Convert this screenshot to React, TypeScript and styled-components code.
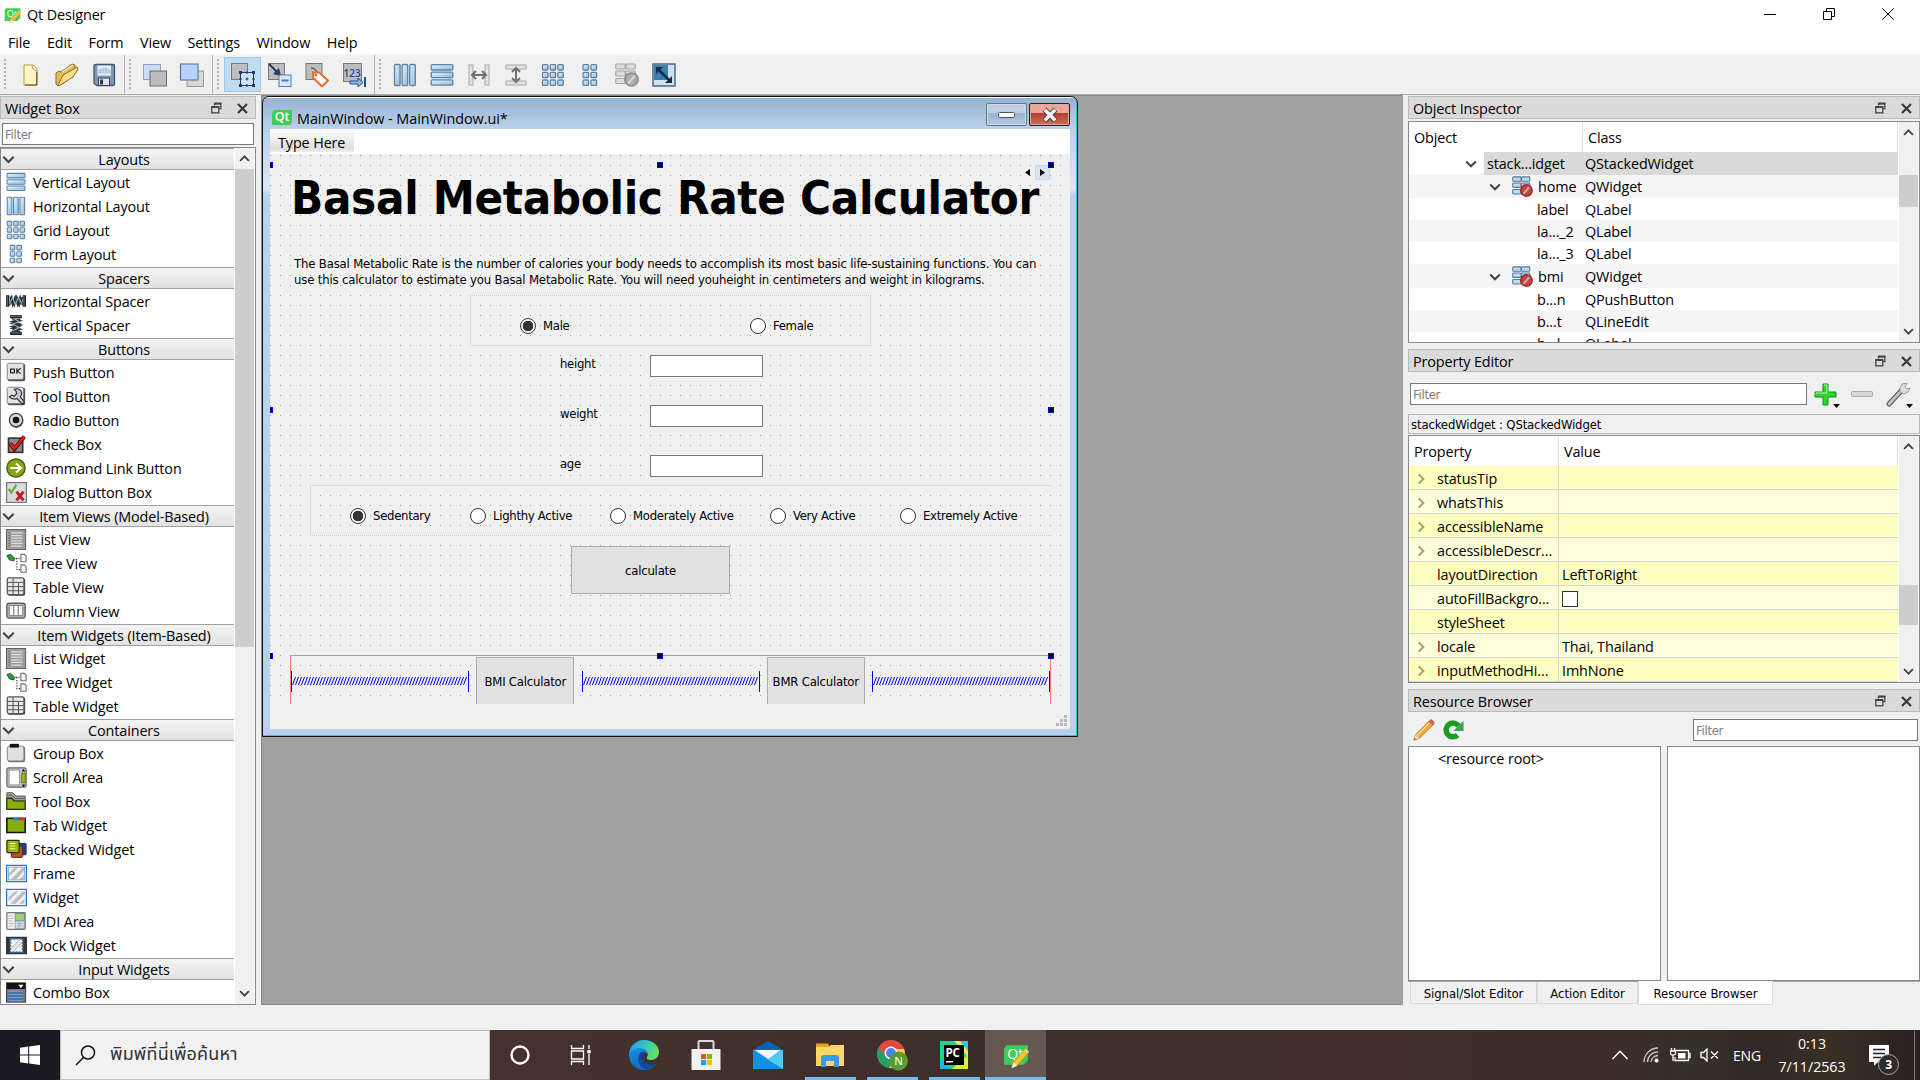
import React from "react";
import styled, { createGlobalStyle, css } from "styled-components";

const GlobalStyle = createGlobalStyle`
  * { box-sizing: border-box; }
  html, body { margin: 0; padding: 0; overflow: hidden; }
  svg { display: block; flex: none; }
`;

const uiFont = css`
  font-family: "Open Sans", "Noto Sans", sans-serif;
  font-size: 14.4px;
  letter-spacing: -0.12px;
`;
const smallFont = css`
  font-family: "DejaVu Sans Condensed", "DejaVu Sans", sans-serif;
  font-stretch: condensed;
  font-size: 13px;
  letter-spacing: -0.3px;
`;

/* ---------- shell ---------- */

const Screen = styled.div`
  width: 1920px;
  height: 1080px;
  display: flex;
  flex-direction: column;
  background: #f0f0f0;
  color: #000;
  white-space: nowrap;
  ${uiFont}
`;
const TitleBar = styled.header`
  height: 30px;
  background: #fff;
  display: flex;
  align-items: center;
  padding: 0 0 2px 4px;
  gap: 6px;
  flex: none;
`;
const WindowControls = styled.div`
  margin-left: auto;
  display: flex;
  gap: 47px;
  padding-right: 26px;
`;
const MenuBar = styled.nav`
  height: 24px;
  flex: none;
  background: #fff;
  display: flex;
  align-items: center;
  padding: 1px 0 0 8px;
  gap: 16.6px;
`;
const ToolBar = styled.div`
  height: 41px;
  flex: none;
  display: flex;
  border-top: 1px solid #f7f7f7;
  border-bottom: 1px solid #a8a8a8;
`;
const ToolGroup = styled.div<{ $w?: number }>`
  width: ${(p) => (p.$w ? `${p.$w}px` : "auto")};
  display: flex;
  align-items: center;
  border-right: ${(p) => (p.$w ? "1px solid #b4b4b4" : "0")};
`;
const Grip = styled.i`
  width: 2px;
  height: 31px;
  margin: 0 5px 0 4px;
  background: repeating-linear-gradient(#b2b2b2 0 2px, transparent 2px 4px);
`;
const ToolButton = styled.button<{ $on?: boolean }>`
  width: 37px;
  height: 35px;
  padding: 0;
  display: grid;
  place-items: center;
  background: ${(p) => (p.$on ? "#c0dcf3" : "transparent")};
  border: 1px solid ${(p) => (p.$on ? "#90c8f6" : "transparent")};
`;
const Workspace = styled.main`
  height: 935px;
  flex: none;
  display: flex;
  align-items: flex-start;
`;

/* ---------- docks ---------- */

const Dock = styled.section<{ $h?: number }>`
  display: flex;
  flex-direction: column;
  flex: none;
  height: ${(p) => (p.$h ? `${p.$h}px` : "auto")};
`;
const DockTitle = styled.header`
  height: 23px;
  flex: none;
  background: #dadada;
  border: 1px solid #b9b9b9;
  display: flex;
  align-items: center;
  padding: 1px 7px 0 4px;
`;
const DockButtons = styled.div`
  margin-left: auto;
  display: flex;
  gap: 15px;
  align-items: center;
`;
const FilterInput = styled.input`
  height: 22px;
  background: #fff;
  border: 1px solid #7a7a7a;
  padding: 0 2px;
  outline: 0;
  min-width: 0;
  ${smallFont}
  &::placeholder { color: #7c7c7c; opacity: 1; }
`;
const LeftColumn = styled.aside`
  width: 261px;
  flex: none;
  padding-top: 1px;
`;
const LeftDock = styled(Dock)`
  width: 256px;
  ${FilterInput} { margin: 4px 2px 2px 2px; }
`;
const ScrollFrame = styled.div`
  display: flex;
  flex: 1;
  min-height: 0;
  border: 1px solid #828790;
  background: #fff;
  overflow: hidden;
`;
const ScrollContent = styled.div`
  flex: 1;
  min-width: 0;
  padding-right: 1px;
  overflow: hidden;
`;
const ScrollTrack = styled.div`
  width: 20px;
  flex: none;
  background: #f0f0f0;
  border-right: 1px solid #fff;
  display: flex;
  flex-direction: column;
`;
const ScrollArrow = styled.div`
  height: 21px;
  flex: none;
  display: grid;
  place-items: center;
`;
const Thumb = styled.div<{ $before: number; $h: number }>`
  margin-top: ${(p) => p.$before}px;
  height: ${(p) => p.$h}px;
  background: #cdcdcd;
  margin-bottom: auto;
`;

const CategoryHeader = styled.div`
  height: 22px;
  display: flex;
  align-items: center;
  background: linear-gradient(#f4f4f4, #e2e2e2);
  border-top: 1px solid #a0a0a0;
  border-bottom: 1px solid #a0a0a0;
  padding-left: 1px;
  span { flex: 1; text-align: center; padding-right: 1px; }
`;
const CategoryItems = styled.div`
  padding-bottom: 1px;
`;
const WidgetRow = styled.div`
  height: 24px;
  display: flex;
  align-items: center;
  padding-left: 4px;
  gap: 6px;
`;
const IconSlot = styled.span`
  width: 22px;
  display: grid;
  place-items: center;
`;

/* ---------- MDI area ---------- */

const MdiArea = styled.div`
  width: 1142px;
  height: 910px;
  flex: none;
  background: #a0a0a0;
  border: 1px solid #8a8a92;
  border-right-color: #98989c;
`;
const SubWindow = styled.div`
  width: 816px;
  height: 641px;
  border: 1px solid #111;
  border-radius: 7px 7px 0 0;
  background: linear-gradient(#fff 0 1px, #99b4d1 1px, #b9d1ea 32px, #dce8f4 92px, #b9d1ea 98px);
  box-shadow: inset -1px -1px 0 #30c4dc;
  padding: 2px 7px 7px;
  display: flex;
  flex-direction: column;
`;
const SubTitle = styled.header`
  height: 30px;
  flex: none;
  display: flex;
  align-items: flex-start;
  padding: 4px 6px 0 8px;
  margin: 0 -6px;
  background: linear-gradient(#99b4d1, #b9d1ea);
`;
const SubCaption = styled.span`
  padding: 6px 0 0 5px;
  line-height: 19px;
  letter-spacing: -0.04px;
`;
const QtTag = styled.span`
  width: 20px;
  height: 15px;
  margin-top: 7px;
  background: #41cd52;
  border-radius: 4px 0 4px 0;
  color: #fff;
  font: 600 12.5px/14px "Open Sans", sans-serif;
  text-align: center;
`;
const SubButton = styled.button<{ $close?: boolean }>`
  width: 41px;
  height: 23px;
  margin-left: ${(p) => (p.$close ? "2px" : "auto")};
  padding: 0;
  display: grid;
  place-items: center;
  border-radius: 2px;
  border: 1px solid ${(p) => (p.$close ? "#501018" : "#66788e")};
  box-shadow: inset 0 0 0 1px ${(p) => (p.$close ? "#e0a89c" : "#cfdcea")};
  background: ${(p) =>
    p.$close
      ? "linear-gradient(#e8a89c 0 42%, #b8382a 42%, #d0705c)"
      : "linear-gradient(#bccfe3 0 42%, #98b2cf 42%, #b2c8df)"};
`;
const FormMenu = styled.div`
  height: 25px;
  flex: none;
  background: #fff;
`;
const TypeHere = styled.div`
  width: 84px;
  height: 23px;
  padding: 3px 0 0 8px;
  line-height: 21px;
  background: linear-gradient(#fff, #dedede 85%, #eee);
`;
const FormCanvas = styled.div`
  position: relative;
  height: 550px;
  flex: none;
  overflow: hidden;
  background: conic-gradient(from 270deg at 1px 1px, #9c9c9c 90deg, transparent 0) 0 1px / 10px 10px #f0f0f0;
  ${smallFont}
`;
const FormStatus = styled.div`
  height: 25px;
  flex: none;
  background: #f0f0f0;
  display: flex;
  justify-content: flex-end;
  align-items: flex-end;
  padding: 2px;
`;
const Heading = styled.h1`
  margin: 0;
  padding: 10px 0 0 21px;
  height: 102px;
  font: bold 47px/68px "DejaVu Sans Condensed", "DejaVu Sans", sans-serif;
  font-stretch: condensed;
  letter-spacing: -0.33px;
`;
const Intro = styled.p`
  margin: 0;
  padding-left: 24px;
  height: 39px;
  line-height: 16px;
  letter-spacing: -0.17px;
`;
const RadioGroup = styled.div<{ $left: number; $w: number; $openEnd?: boolean }>`
  margin-left: ${(p) => p.$left}px;
  width: ${(p) => p.$w}px;
  height: 51px;
  border: 1px dotted #c8c8c8;
  border-right-width: ${(p) => (p.$openEnd ? 0 : 1)}px;
  display: flex;
  align-items: center;
  padding-top: 10px;
`;
const RadioLead = styled.i<{ $w: number }>`
  width: ${(p) => p.$w}px;
  flex: none;
`;
const Radio = styled.label<{ $w: number }>`
  width: ${(p) => p.$w}px;
  flex: none;
  display: flex;
  align-items: center;
  gap: 7px;
`;
const RadioDot = styled.i<{ $on?: boolean }>`
  width: 16px;
  height: 16px;
  border-radius: 50%;
  border: 1px solid #333;
  background: ${(p) => (p.$on ? "radial-gradient(circle, #333 5px, #fff 5.6px)" : "#fff")};
`;
const Fields = styled.div`
  padding: 9px 0 8px 290px;
  display: grid;
  grid-template-columns: 90px 113px;
  grid-auto-rows: 22px;
  row-gap: 28px;
  span { line-height: 17px; }
`;
const FieldBox = styled.input`
  border: 1px solid #7a7a7a;
  background: #fff;
  padding: 0;
`;
const PushButton = styled.button<{ $w: number; $h: number }>`
  width: ${(p) => p.$w}px;
  height: ${(p) => p.$h}px;
  flex: none;
  padding: 0;
  background: #e1e1e1;
  border: 1px solid #adadad;
  color: #000;
  ${smallFont}
  letter-spacing: -0.22px;
`;
const ButtonLine = styled.div`
  padding: 10px 0 0 301px;
  height: 119px;
`;
const SpringRow = styled.div`
  margin-left: 20px;
  width: 761px;
  height: 58px;
  border: 1px solid #ef7d7d;
  padding-top: 1px;
  display: flex;
  align-items: flex-start;
  justify-content: space-between;
  svg { margin-top: 14px; }
`;
const Handle = styled.i<{ $x: number; $y: number }>`
  position: absolute;
  left: ${(p) => p.$x}px;
  top: ${(p) => p.$y}px;
  width: 6px;
  height: 6px;
  background: #000;
  border: 1px solid #0000f0;
`;
const PageSwitch = styled.div`
  position: absolute;
  left: 750px;
  top: 11px;
  display: flex;
`;
const PageButton = styled.i<{ $hot?: boolean }>`
  width: 15px;
  height: 15px;
  display: grid;
  place-items: center;
  background: ${(p) => (p.$hot ? "#d8e6f2" : "transparent")};
  border: 1px solid ${(p) => (p.$hot ? "#c0dcf3" : "transparent")};
`;

/* ---------- right column ---------- */

const RightColumn = styled.aside`
  flex: 1;
  padding: 1px 0 0 5px;
  display: flex;
  flex-direction: column;
`;
const Spacer = styled.div<{ $h: number }>`
  height: ${(p) => p.$h}px;
  flex: none;
`;
const HeaderRow = styled.div<{ $first: number }>`
  display: grid;
  grid-template-columns: ${(p) => p.$first}px 1fr;
  height: 30px;
  border-right: 1px solid #e0e0e0;
  span { padding-left: 5px; line-height: 31px; }
  span:first-child { border-right: 1px solid #e0e0e0; }
`;
const TreeRow = styled.div<{ $h: number; $bg: string; $indent: number }>`
  height: ${(p) => p.$h}px;
  display: grid;
  grid-template-columns: 176px 1fr;
  align-items: stretch;
  background: ${(p) => p.$bg};
  line-height: ${(p) => p.$h + 1}px;
  > div { display: flex; align-items: center; padding-left: ${(p) => p.$indent}px; overflow: hidden; }
`;
const NodeIcon = styled.span`
  padding: 0 5px 0 11px;
`;
const Selected = styled.span`
  flex: 1;
  background: #d9d9d9;
  padding-left: 3px;
  margin-left: 7px;
`;
const ClassCell = styled.span<{ $on?: boolean }>`
  background: ${(p) => (p.$on ? "#d9d9d9" : "transparent")};
`;
const PropertyRow = styled.div<{ $alt: boolean }>`
  height: 24px;
  display: grid;
  grid-template-columns: 150px 1fr;
  background: ${(p) => (p.$alt ? "#ffffdc" : "#ffffbf")};
  border-bottom: 1px solid #d4d4d0;
  line-height: 25px;
  > div { display: flex; align-items: center; }
  > div:first-child { border-right: 1px solid #d4d4d0; padding-left: 6px; }
  > div:last-child { padding-left: 3px; }
`;
const Expander = styled.i`
  width: 22px;
`;
const CheckSquare = styled.i`
  width: 16px;
  height: 16px;
  border: 1px solid #333;
  background: #fff;
`;
const PropertyTools = styled.div`
  display: flex;
  height: 42px;
  flex: none;
  padding: 11px 0 0 2px;
  ${FilterInput} { width: 397px; margin-right: 6px; }
`;
const ObjectPath = styled.div`
  height: 20px;
  flex: none;
  margin-bottom: 1px;
  border: 1px solid #b9b9b9;
  padding-left: 2px;
  line-height: 19px;
  ${smallFont}
  letter-spacing: -0.15px;
`;
const ResourceTools = styled.div`
  display: flex;
  height: 34px;
  flex: none;
  padding: 7px 2px 0 5px;
  gap: 7px;
  ${FilterInput} { width: 225px; margin-left: auto; }
`;
const Panes = styled.div`
  display: flex;
  gap: 6px;
  height: 235px;
  flex: none;
`;
const Pane = styled.div`
  flex: 1;
  background: #fff;
  border: 1px solid #828790;
  padding: 2px 0 0 29px;
`;
const Tabs = styled.div`
  display: flex;
  align-items: flex-start;
  padding-left: 2px;
  border-top: 1px solid #a8a8a8;
  ${smallFont}
  letter-spacing: -0.05px;
`;
const Tab = styled.div<{ $w: number; $on?: boolean }>`
  width: ${(p) => p.$w}px;
  height: ${(p) => (p.$on ? 24 : 22)}px;
  line-height: ${(p) => (p.$on ? 26 : 23)}px;
  margin-top: ${(p) => (p.$on ? "-1px" : "0")};
  text-align: center;
  background: ${(p) => (p.$on ? "#fff" : "#f0f0f0")};
  border: 1px solid #d9d9d9;
  border-top: 0;
`;

/* ---------- taskbar ---------- */

const StatusGap = styled.div`
  height: 0;
  flex: 1;
`;
const TaskBar = styled.footer`
  height: 50px;
  flex: none;
  display: flex;
  color: #fff;
  background: linear-gradient(90deg, #1d1b22 0, #1d1b22 60px, #46312f 490px, #3c2f29 1000px, #422f2a 1300px, #3f2d28 1580px, #353127 1700px, #2f2826 1760px, #393025 1830px, #292022 1920px);
`;
const Start = styled.div`
  width: 60px;
  display: grid;
  place-items: center;
`;
const Search = styled.div`
  width: 430px;
  background: #f2f2f2;
  border: 1px solid #bcbcbc;
  display: flex;
  align-items: center;
  padding-left: 14px;
  gap: 14px;
  color: #333;
  font: 18px/24px "Noto Sans Thai", "Noto Sans", "Loma", sans-serif;
  letter-spacing: 0.15px;
`;
const TaskItem = styled.div<{ $w: number; $on?: boolean; $open?: boolean }>`
  width: ${(p) => p.$w}px;
  display: grid;
  place-items: center;
  background: ${(p) => (p.$on ? "#655852" : "transparent")};
  box-shadow: ${(p) => (p.$on ? "inset 0 -3px 0 #76b9ed" : "none")};
  background-image: ${(p) => (p.$open ? "linear-gradient(#76b9ed, #76b9ed)" : "none")};
  background-size: 51px 3px;
  background-position: center bottom;
  background-repeat: no-repeat;
`;
const Tray = styled.div`
  margin-left: auto;
  display: flex;
  align-items: center;
`;
const TrayGap = styled.i<{ $w: number }>`
  width: ${(p) => p.$w}px;
`;
const Lang = styled.span`
  width: 56px;
  text-align: center;
  font-size: 14px;
`;
const Clock = styled.div`
  width: 74px;
  text-align: center;
  font-size: 14.2px;
  line-height: 23px;
  padding-top: 0;
  letter-spacing: 0;
`;
const Notice = styled.div`
  position: relative;
  margin-left: 17px;
  width: 49px;
  height: 50px;
  border-right: 1px solid #7d7673;
  padding: 15px 0 0 3px;
`;
const Badge = styled.span`
  position: absolute;
  left: 12px;
  top: 24px;
  width: 21px;
  height: 21px;
  border: 1px solid #aaa;
  border-radius: 50%;
  background: #2f2b2b;
  font: bold 12px/19px "Open Sans", sans-serif;
  text-align: center;
`;

/* ---------- icons ---------- */

type Cell = [number, number, number, number];
const Cells = ({ cells, size = 24 }: { cells: Cell[]; size?: number }) => (
  <svg width={size} height={size} viewBox="0 0 24 24">
    <defs>
      <linearGradient id="cellFill" x1="0" y1="0" x2="1" y2="1">
        <stop offset="0" stopColor="#e2f4ff" />
        <stop offset="1" stopColor="#86bfe6" />
      </linearGradient>
    </defs>
    {cells.map(([x, y, w, h], i) => (
      <rect key={i} x={x} y={y} width={w} height={h} rx="1" fill="url(#cellFill)" stroke="#64809c" strokeWidth="1.3" />
    ))}
  </svg>
);
const range = (n: number) => Array.from({ length: n }, (_, i) => i);
const columns: Cell[] = range(3).map((i) => [1.5 + i * 7.6, 1.5, 5.6, 21]);
const rowsCells: Cell[] = range(3).map((i) => [1.2, 1.6 + i * 7.6, 21.6, 5.4]);
const gridCells: Cell[] = range(9).map((i) => [1.5 + (i % 3) * 7.7, 1.6 + Math.floor(i / 3) * 7.7, 5.4, 5.4]);
const formCells: Cell[] = range(6).map((i) => [5 + (i % 2) * 8, 1.6 + Math.floor(i / 2) * 7.7, 5.6, 5.4]);

const Svg = ({ s = 24, children }: { s?: number; children: React.ReactNode }) => (
  <svg width={s} height={s} viewBox="0 0 24 24" fill="none">{children}</svg>
);
const GraySquare = ({ x = 1, y = 1, s = 16 }) => (
  <rect x={x} y={y} width={s} height={s} fill="#bdbdbd" stroke="#777" />
);

const NewIcon = () => (
  <Svg><path d="M6 2h8q5 1 5 7v13H6z" fill="#fff6c4" stroke="#b59a3c" /><path d="M14 2q0 5 5 6" fill="#fff" stroke="#b59a3c" /><path d="M18.800 9v13H7" stroke="#4d4630" /></Svg>
);
const OpenIcon = () => (
  <Svg><path d="M1 21V10l3-2 2 1 11-8 3 1v5L9 20l-6 3z" fill="#e3bf5a" stroke="#8c6a1c" /><path d="M3 22l5-10L22 4l1 2-5 8-14 9z" fill="#f7dc8a" stroke="#8c6a1c" /><path d="M7 9L18 2" stroke="#fff" /></Svg>
);
const SaveIcon = () => (
  <Svg><path d="M4 1.500h17q1.500 0 1.500 1.500v18q0 1.500-1.500 1.500H5l-3-2V3q0-1.500 2-1.500z" fill="#7d97b8" stroke="#41566f" strokeWidth="1.300" /><rect x="5.500" y="2.500" width="13.500" height="10" fill="#e9f0f7" /><path d="M5.500 7q8-5 13.500 0v3.500H5.500z" fill="#b4cde8" /><rect x="6.500" y="15" width="11" height="7.500" fill="#e4e4e4" stroke="#3b4250" /><rect x="8" y="16.500" width="3" height="5" fill="#2b3c58" /></Svg>
);
const LowerIcon = () => (
  <Svg><rect x="0.500" y="1.500" width="17" height="15" fill="#cbdcf6" stroke="#8ba3cc" /><rect x="7" y="8" width="16.500" height="15" fill="#bcbcbc" stroke="#6b6b6b" /></Svg>
);
const RaiseIcon = () => (
  <Svg><rect x="7" y="8" width="16.500" height="15.500" fill="#d7d7d7" stroke="#9a9a9a" /><rect x="0.500" y="1" width="17.500" height="16" fill="#b8d2fa" stroke="#4d6a9c" /></Svg>
);
const EditWidgetsIcon = () => (
  <Svg><GraySquare x={0.5} y={0.5} s={16} /><rect x="9.500" y="9.500" width="13" height="13" fill="#cfe2f8" stroke="#1f3d66" />{[9.5, 22.5].map((x) => [9.5, 22.5].map((y) => <rect key={`${x}${y}`} x={x - 1.5} y={y - 1.5} width="3" height="3" fill="#1f3d66" />))}<path d="M16 14.500v3M14.500 16h3" stroke="#1f3d66" /><path d="M16 8v3M16 21v3M8 16h3M21 16h3" stroke="#1f3d66" strokeDasharray="1 1" /></Svg>
);
const SignalsIcon = () => (
  <Svg><GraySquare x={0.5} y={0.5} s={16} /><path d="M1 1l9 9" stroke="#1e3f63" strokeWidth="2" /><path d="M13 13L11 5 5 11z" fill="#1e3f63" /><rect x="11" y="12" width="12" height="11.500" fill="#d9e8fb" stroke="#5277b0" /><path d="M13.500 17.500h7" stroke="#5277b0" strokeWidth="2" /></Svg>
);
const BuddyIcon = () => (
  <Svg><GraySquare x={1} y={0.5} s={16} /><path d="M6 5q5 0 6 5" stroke="#333" /><path d="M8 9.500h6l9 8-6 6-9-9z" fill="#fff" stroke="#e0702c" strokeWidth="2" /><circle cx="10.800" cy="12" r="1.200" fill="#c4541c" /></Svg>
);
const TabOrderIcon = () => (
  <Svg><GraySquare x={1.500} y={0.5} s={18} /><text x="1.500" y="14" fontSize="10" fontFamily="Open Sans" fontWeight="600" letterSpacing="0" fill="#1f4f8f">123</text><path d="M8 18h8v-3l5 4.500-5 4.500v-3H8z" fill="#8fbbe8" stroke="#1f4f8f" /><path d="M23 14v10" stroke="#1f4f8f" strokeWidth="2" /></Svg>
);
const SplitHIcon = () => (
  <Svg><rect x="2" y="2" width="4" height="20" fill="#e4e4e4" stroke="#a8a8a8" /><rect x="18" y="2" width="4" height="20" fill="#e4e4e4" stroke="#a8a8a8" /><path d="M5 12h14M9 8l-4 4 4 4M15 8l4 4-4 4" stroke="#707070" strokeWidth="2" /></Svg>
);
const SplitVIcon = () => (
  <Svg><rect x="2" y="2" width="20" height="4" fill="#e4e4e4" stroke="#a8a8a8" /><rect x="2" y="18" width="20" height="4" fill="#e4e4e4" stroke="#a8a8a8" /><path d="M12 5v14M8 9l4-4 4 4M8 15l4 4 4-4" stroke="#707070" strokeWidth="2" /></Svg>
);
const BreakIcon = ({ gray, s = 24 }: { gray?: boolean; s?: number }) => {
  const c = gray ? ["#dedede", "#a4a4a4", "#aaaaaa", "#8b8b8b"] : ["#b5dcf5", "#5c7790", "#cf3f3a", "#8f2a28"];
  return (
    <Svg s={s}>
      {[1, 8, 15.5].map((y) => (
        <g key={y} fill={c[0]} stroke={c[1]} strokeWidth="1.2"><rect x="0.8" y={y} width="9.5" height="5" rx="1" /><rect x="10.8" y={y} width="9.5" height="5" rx="1" /></g>
      ))}
      <circle cx="16.500" cy="16.500" r="6.600" fill={c[2]} stroke={c[3]} strokeWidth="1.500" />
      <path d="M14 19.500l5-6" stroke={gray ? "#d5d5d5" : "#a7b3c4"} strokeWidth="2.500" strokeLinecap="round" />
    </Svg>
  );
};
const AdjustIcon = () => (
  <Svg><rect x="1" y="1" width="22" height="22" fill="#cfe0ee" stroke="#4b6a86" strokeWidth="1.500" /><path d="M2 2h14v15H2z" fill="#3f7fae" /><path d="M6 6l12 12" stroke="#0e2e49" strokeWidth="2.500" /><path d="M4 4h7l-7 7zM20 20h-7l7-7z" fill="#0e2e49" /></Svg>
);
const SpacerIcon = ({ v }: { v?: boolean }) => (
  <Svg s={20}><g transform={v ? "rotate(90 12 12)" : ""}><path d="M2 5v14M22 5v14" stroke="#222" strokeWidth="4" /><path d="M1.500 6v12M21.500 6v12" stroke="#8d8d8d" /><path d="M4 17L7 7l3 10 3-10 3 10 4-10M5 7l3 10 3-10 3 10 3-10 3 10" stroke="#2c3538" strokeWidth="2" /><path d="M4 15l4-7 3 8 4-8 4 7" stroke="#8fb4c4" strokeWidth="1.300" /></g></Svg>
);
const Raised = ({ children }: { children?: React.ReactNode }) => (
  <Svg s={20}><rect x="2" y="2" width="21" height="21" rx="2" fill="#555" /><rect x="1.500" y="1.500" width="19.500" height="19.500" rx="2" fill="#e2e2e2" stroke="#777" />{children}</Svg>
);
const PushIcon = () => <Raised><rect x="5.500" y="8.500" width="4.500" height="4.500" stroke="#111" strokeWidth="1.300" /><path d="M13 7.500v6.500M17.500 7.500L13.500 11l4 3" stroke="#111" strokeWidth="1.300" /></Raised>;
const ToolIcon = () => <Raised><path d="M10 4q5-2 8 2 2 4-1 7l5 6-2 3-7-7q-5 2-9-2l3-2 3 1 3-3-1-3z" fill="#c3ccd6" stroke="#333" strokeWidth="1.400" /></Raised>;
const RadioIcon = () => <Svg s={20}><circle cx="12.500" cy="13" r="8.500" fill="#555" /><circle cx="12" cy="12" r="8" fill="#d8d8d8" stroke="#444" strokeWidth="1.500" /><circle cx="12" cy="12" r="4" fill="#111" /></Svg>;
const CheckIcon = () => <Svg s={20}><rect x="3" y="5" width="17" height="17" fill="#8d8d8d" stroke="#333" strokeWidth="2" /><path d="M5 11l5 7L22 3" stroke="#5c0000" strokeWidth="5" /><path d="M5 11l5 6.500L22 3" stroke="#dd2222" strokeWidth="3" /></Svg>;
const CommandIcon = () => <Svg s={20}><circle cx="12" cy="12" r="11" fill="#86a514" stroke="#44560a" strokeWidth="1.500" /><path d="M5 12h12M12 6.500l6 5.500-6 5.500" stroke="#fff" strokeWidth="2.500" /></Svg>;
const DialogIcon = () => <Svg s={21}><rect x="0.700" y="0.700" width="22.600" height="22.600" fill="#dcdcdc" stroke="#777" strokeWidth="1.400" /><path d="M3 8l3 4 6-9" stroke="#5cb531" strokeWidth="2.500" /><path d="M12 11l8 10M20 11l-8 10" stroke="#c01e24" strokeWidth="3.500" /></Svg>;
const ListIcon = () => <Svg s={21}><rect x="0.500" y="0.500" width="22" height="23" fill="#9c9c9c" stroke="#555" /><path d="M6 4.500h13M6 7.500h12M6 10.500h13M6 13.500h12M6 16.500h13M6 19.500h12" stroke="#dedede" strokeWidth="1.400" /><path d="M3 4.500h1.500M3 7.500h1.500M3 10.500h1.500M3 13.500h1.500M3 16.500h1.500M3 19.500h1.500" stroke="#555" /></Svg>;
const TreeIcon = () => <Svg s={21}><path d="M1 3l4-1.500 5 4.500-1 3-5-1z" fill="#2f9a3c" stroke="#12511c" /><path d="M11 6h5M12.500 6v13h4" stroke="#333" strokeWidth="1.300" strokeDasharray="1.500 1.500" /><path d="M17 1.500h4l2 2v6.500h-6zM17 13.500h4l2 2v6.500h-6z" fill="#f2f2f2" stroke="#777" strokeWidth="1.300" /></Svg>;
const TableIcon = () => <Svg s={20}><rect x="2" y="1.500" width="21" height="21" rx="2" fill="#444" /><rect x="1.500" y="1" width="20" height="20" rx="2" fill="#e8e8e8" stroke="#555" strokeWidth="1.500" /><path d="M2 6.500h19M2 11.500h19M2 16.500h19M8.500 1.500v19M15 6.500v14" stroke="#555" strokeWidth="1.200" /></Svg>;
const ColumnIcon = () => <Svg s={20}><rect x="1" y="2.500" width="22" height="18" rx="3" fill="#b5b5b5" stroke="#555" strokeWidth="1.500" /><path d="M4 5.500h16v12H4z" fill="#fff" stroke="#777" /><path d="M9.300 5.500v12M14.700 5.500v12" stroke="#777" strokeWidth="1.300" /></Svg>;
const GroupIcon = () => <Svg s={20}><rect x="2" y="4" width="21" height="19" rx="3" fill="#777" /><rect x="1.500" y="3.500" width="20" height="18" rx="3" fill="#e0e0e0" stroke="#777" /><rect x="4.500" y="1" width="11" height="4.500" fill="#111" /></Svg>;
const ScrollIcon = () => <Svg s={21}><rect x="1" y="1" width="22" height="22" rx="2" fill="#c9c9c9" stroke="#666" strokeWidth="1.400" /><rect x="3.500" y="3.500" width="12" height="17" fill="#fff" stroke="#888" /><rect x="18" y="7" width="4" height="11" fill="#9ac21c" stroke="#536d05" /><path d="M18 5l2-3 2 3zM18 20l2 3 2-3z" fill="#111" /></Svg>;
const ToolBoxIcon = () => <Svg s={20}><path d="M1 2h7l4 4h11v16H1z" fill="#a0a0a0" stroke="#444" /><path d="M1 5h6l4 4h12M1 8h6l4 4h12" stroke="#555" /><path d="M1 9h6l3 3h13v10H1z" fill="#86ac10" stroke="#26330a" strokeWidth="1.400" /></Svg>;
const TabIcon = () => <Svg s={20}><path d="M1 4h22v17H1z" fill="#86ac10" stroke="#111" strokeWidth="1.800" /><path d="M8.500 3.500h7v3h-7z" fill="#2383e6" /><path d="M16 3.500h7v3h-7z" fill="#e03434" /></Svg>;
const StackIcon = () => <Svg s={21}><rect x="10" y="5" width="13" height="13" rx="1" fill="#12479c" stroke="#0a2148" /><rect x="6" y="8" width="13" height="13" rx="1" fill="#cc4a14" stroke="#43200c" /><rect x="1" y="1.500" width="14" height="14" rx="1" fill="#94b913" stroke="#26330a" strokeWidth="1.400" /><path d="M4.500 5h6M4.500 8h6M4.500 11h6" stroke="#f3f878" strokeWidth="1.400" /></Svg>;
const FrameIcon = ({ inner }: { inner?: boolean }) => <Svg s={21}><rect x="0.700" y="2.700" width="22.600" height="18.600" fill="#f1f1f1" stroke="#2b73c4" strokeWidth="1.400" /><path d="M3 12l7-7h4L3 16zM5 19L19 5h2.500v3L11 19zM15 19l6-6v5l-1 1z" fill="#bdbdbd" />{inner && <rect x="2.800" y="4.800" width="18.400" height="14.400" stroke="#85b0de" />}</Svg>;
const MdiIcon = () => <Svg s={20}><rect x="1" y="2" width="22" height="20" rx="1" fill="#f3f3f3" stroke="#777" strokeWidth="1.500" /><rect x="11" y="3" width="11" height="9" fill="#9fcf7d" stroke="#6b8f55" /><rect x="11" y="12" width="11" height="9" fill="#cfdcf0" stroke="#8599b8" /><path d="M3 6h5M3 9h6M3 12h5M3 15h6M3 18h5M13 15h7M13 18h7M16 13v8" stroke="#aaa" /></Svg>;
const DockIcon = () => <Svg s={21}><rect x="0" y="2" width="24" height="20" fill="#33353a" /><rect x="5" y="4.500" width="14" height="15" fill="#f1f1f1" stroke="#2b73c4" strokeWidth="2" strokeDasharray="2 1.500" /><path d="M7 15l8-9M9 18l8-9" stroke="#ccc" strokeWidth="2" /></Svg>;
const ComboIcon = () => <Svg s={21}><rect x="0.500" y="1" width="22" height="22" fill="#777" stroke="#333" /><rect x="1" y="1" width="21" height="7" fill="#111" /><path d="M14 3h6l-3 4z" fill="#fff" /><rect x="3" y="9.500" width="16" height="12.500" fill="#6c99d8" /><path d="M3 12.500h16M3 16h16M3 19.500h16" stroke="#24466f" /></Svg>;

const Chevron = ({ dir = "down", color = "#444", w = 12 }: { dir?: "down" | "up" | "right"; color?: string; w?: number }) => (
  <svg width={w} height={w} viewBox="0 0 12 12" fill="none" stroke={color} strokeWidth="2">
    <path d={dir === "down" ? "M1.200 3.500L6 8.300 10.800 3.500" : dir === "up" ? "M1.200 8.500L6 3.700l4.800 4.800" : "M3.500 1.200L8.300 6 3.500 10.800"} />
  </svg>
);
const FloatIcon = () => (
  <svg width="11" height="12" viewBox="0 0 11 12" fill="none" stroke="#444" strokeWidth="1.300"><path d="M3.500 3.500V1.700h6.300v5H8" /><path d="M3 1.500h7.400" strokeWidth="2" /><rect x="0.800" y="5" width="7" height="5.800" /><path d="M0.500 5h7.600" strokeWidth="2" /></svg>
);
const CloseIcon = () => (
  <svg width="11" height="11" viewBox="0 0 11 11" stroke="#3a3a3a" strokeWidth="2.200"><path d="M1 1l9 9M10 1l-9 9" /></svg>
);
const QtIcon = ({ s }: { s: number }) => (
  <Svg s={s}>
    <path d="M3 3h20v14l-4 4H1V6z" fill="#41cd52" />
    <text x="4" y="16" fontSize="13" fontFamily="Open Sans" fill="#fff">Qt</text>
    <path d="M21 6l3 3-11 13-5 2 1.500-5z" fill="#fbc531" stroke="#c78f1c" strokeWidth="0.600" />
    <path d="M19.500 7.700L21 6l3 3-1.500 1.700z" fill="#f3c1b0" />
    <path d="M8 24l1.500-5 3.500 3z" fill="#eee" />
  </Svg>
);
const Spring = () => (
  <svg width="178" height="21" viewBox="0 0 178 21" stroke="#0000e0" fill="none">
    <path d="M0.500 0v21M177.500 0v21" />
    <path d={range(58).map((i) => `M${1.500 + i * 3} 14l3-8`).join("")} strokeWidth="1" />
  </svg>
);

/* ---------- data ---------- */

const palette: { title: string; items: [string, React.ReactNode][] }[] = [
  { title: "Layouts", items: [
    ["Vertical Layout", <Cells size={20} cells={rowsCells} />],
    ["Horizontal Layout", <Cells size={20} cells={columns} />],
    ["Grid Layout", <Cells size={20} cells={gridCells} />],
    ["Form Layout", <Cells size={20} cells={formCells} />],
  ] },
  { title: "Spacers", items: [["Horizontal Spacer", <SpacerIcon />], ["Vertical Spacer", <SpacerIcon v />]] },
  { title: "Buttons", items: [
    ["Push Button", <PushIcon />], ["Tool Button", <ToolIcon />], ["Radio Button", <RadioIcon />],
    ["Check Box", <CheckIcon />], ["Command Link Button", <CommandIcon />], ["Dialog Button Box", <DialogIcon />],
  ] },
  { title: "Item Views (Model-Based)", items: [
    ["List View", <ListIcon />], ["Tree View", <TreeIcon />], ["Table View", <TableIcon />], ["Column View", <ColumnIcon />],
  ] },
  { title: "Item Widgets (Item-Based)", items: [["List Widget", <ListIcon />], ["Tree Widget", <TreeIcon />], ["Table Widget", <TableIcon />]] },
  { title: "Containers", items: [
    ["Group Box", <GroupIcon />], ["Scroll Area", <ScrollIcon />], ["Tool Box", <ToolBoxIcon />], ["Tab Widget", <TabIcon />],
    ["Stacked Widget", <StackIcon />], ["Frame", <FrameIcon inner />], ["Widget", <FrameIcon />], ["MDI Area", <MdiIcon />], ["Dock Widget", <DockIcon />],
  ] },
  { title: "Input Widgets", items: [["Combo Box", <ComboIcon />]] },
];

type Node = { name: string; cls: string; kind: "sel" | "page" | "leaf" };
const objects: Node[] = [
  { name: "stack...idget", cls: "QStackedWidget", kind: "sel" },
  { name: "home", cls: "QWidget", kind: "page" },
  { name: "label", cls: "QLabel", kind: "leaf" },
  { name: "la..._2", cls: "QLabel", kind: "leaf" },
  { name: "la..._3", cls: "QLabel", kind: "leaf" },
  { name: "bmi", cls: "QWidget", kind: "page" },
  { name: "b...n", cls: "QPushButton", kind: "leaf" },
  { name: "b...t", cls: "QLineEdit", kind: "leaf" },
  { name: "b...l", cls: "QLabel", kind: "leaf" },
];
const indents = { sel: 56, page: 80, leaf: 128 };

const properties: { name: string; value?: string; open?: boolean; check?: boolean }[] = [
  { name: "statusTip", open: true },
  { name: "whatsThis", open: true },
  { name: "accessibleName", open: true },
  { name: "accessibleDescr...", open: true },
  { name: "layoutDirection", value: "LeftToRight" },
  { name: "autoFillBackgro...", check: true },
  { name: "styleSheet" },
  { name: "locale", value: "Thai, Thailand", open: true },
  { name: "inputMethodHi...", value: "ImhNone", open: true },
];

const toolGroups: { w?: number; items: [React.ReactNode, boolean?][] }[] = [
  { w: 125, items: [[<NewIcon />], [<OpenIcon />], [<SaveIcon />]] },
  { w: 88, items: [[<LowerIcon />], [<RaiseIcon />]] },
  { w: 162, items: [[<EditWidgetsIcon />, true], [<SignalsIcon />], [<BuddyIcon />], [<TabOrderIcon />]] },
  { items: [
    [<Cells cells={columns} />], [<Cells cells={rowsCells} />], [<SplitHIcon />], [<SplitVIcon />],
    [<Cells cells={gridCells} />], [<Cells cells={formCells} />], [<BreakIcon gray />], [<AdjustIcon />],
  ] },
];

/* ---------- parts ---------- */

const DockHeader = ({ title }: { title: string }) => (
  <DockTitle>
    {title}
    <DockButtons><FloatIcon /><CloseIcon /></DockButtons>
  </DockTitle>
);
const Scroller = ({ before, h }: { before: number; h: number }) => (
  <ScrollTrack>
    <ScrollArrow><Chevron dir="up" w={11} /></ScrollArrow>
    <Thumb $before={before} $h={h} />
    <ScrollArrow><Chevron w={11} /></ScrollArrow>
  </ScrollTrack>
);

const WidgetBox = () => (
  <LeftColumn>
    <LeftDock $h={909}>
      <DockHeader title="Widget Box" />
      <FilterInput placeholder="Filter" />
      <ScrollFrame>
        <ScrollContent>
          {palette.map((group) => (
            <React.Fragment key={group.title}>
              <CategoryHeader><Chevron w={13} /><span>{group.title}</span></CategoryHeader>
              <CategoryItems>
                {group.items.map(([name, icon]) => (
                  <WidgetRow key={name}><IconSlot>{icon}</IconSlot>{name}</WidgetRow>
                ))}
              </CategoryItems>
            </React.Fragment>
          ))}
        </ScrollContent>
        <Scroller before={0} h={478} />
      </ScrollFrame>
    </LeftDock>
  </LeftColumn>
);

const FormWindow = () => (
  <SubWindow>
    <SubTitle>
      <QtTag>Qt</QtTag>
      <SubCaption>MainWindow - MainWindow.ui*</SubCaption>
      <SubButton><svg width="17" height="6"><rect x="0.500" y="0.500" width="16" height="5" rx="1" fill="#fff" stroke="#4b5563" /></svg></SubButton>
      <SubButton $close>
        <svg width="18" height="16" viewBox="0 0 18 16"><path d="M3.500 2.500l11 11M14.500 2.500l-11 11" stroke="#5b3a44" strokeWidth="5.500" /><path d="M3.800 2.800l10.400 10.400M14.200 2.800L3.800 13.200" stroke="#f4f4f4" strokeWidth="3.500" /></svg>
      </SubButton>
    </SubTitle>
    <FormMenu><TypeHere>Type Here</TypeHere></FormMenu>
    <FormCanvas>
      <Heading>Basal Metabolic Rate Calculator</Heading>
      <Intro>
        The Basal Metabolic Rate is the number of calories your body needs to accomplish its most basic life-sustaining functions. You can<br />
        use this calculator to estimate you Basal Metabolic Rate. You will need youheight in centimeters and weight in kilograms.
      </Intro>
      <RadioGroup $left={200} $w={401}>
        <RadioLead $w={49} />
        <Radio $w={230}><RadioDot $on />Male</Radio>
        <Radio $w={100}><RadioDot />Female</Radio>
      </RadioGroup>
      <Fields>
        <span>height</span><FieldBox />
        <span>weight</span><FieldBox />
        <span>age</span><FieldBox />
      </Fields>
      <RadioGroup $left={40} $w={741} $openEnd>
        <RadioLead $w={39} />
        <Radio $w={120}><RadioDot $on />Sedentary</Radio>
        <Radio $w={140}><RadioDot />Lighthy Active</Radio>
        <Radio $w={160}><RadioDot />Moderately Active</Radio>
        <Radio $w={130}><RadioDot />Very Active</Radio>
        <Radio $w={130}><RadioDot />Extremely Active</Radio>
      </RadioGroup>
      <ButtonLine><PushButton $w={159} $h={48}>calculate</PushButton></ButtonLine>
      <SpringRow>
        <Spring />
        <PushButton $w={98} $h={49}>BMI Calculator</PushButton>
        <Spring />
        <PushButton $w={98} $h={49}>BMR Calculator</PushButton>
        <Spring />
      </SpringRow>
      <PageSwitch>
        <PageButton><svg width="5" height="7"><path d="M5 0v7L0 3.500z" /></svg></PageButton>
        <PageButton $hot><svg width="5" height="7"><path d="M0 0v7l5-3.500z" /></svg></PageButton>
      </PageSwitch>
      {[8, 253, 499].map((y) => [-3, 387, 778].map((x) => (x === 387 && y === 253 ? null : <Handle key={`${x}-${y}`} $x={x} $y={y} />)))}
    </FormCanvas>
    <FormStatus>
      <svg width="12" height="12" fill="#b8b8b8"><path d="M8 0h3v3H8zM4 4h3v3H4zM8 4h3v3H8zM0 8h3v3H0zM4 8h3v3H4zM8 8h3v3H8z" /></svg>
    </FormStatus>
  </SubWindow>
);

const ObjectInspector = () => (
  <Dock $h={247}>
    <DockHeader title="Object Inspector" />
    <Spacer $h={2} />
    <ScrollFrame>
      <ScrollContent>
        <HeaderRow $first={174}><span>Object</span><span>Class</span></HeaderRow>
        {objects.map((o, i) => (
          <TreeRow key={i} $h={o.kind === "page" ? 24 : 22} $bg={i % 2 ? "#f5f5f5" : "#fff"} $indent={indents[o.kind]}>
            <div>
              {o.kind !== "leaf" && <Chevron />}
              {o.kind === "page" && <NodeIcon><BreakIcon s={21} /></NodeIcon>}
              {o.kind === "sel" ? <Selected>{o.name}</Selected> : o.name}
            </div>
            <ClassCell $on={o.kind === "sel"}>{o.cls}</ClassCell>
          </TreeRow>
        ))}
      </ScrollContent>
      <Scroller before={32} h={32} />
    </ScrollFrame>
  </Dock>
);

const PropertyEditor = () => (
  <Dock $h={334}>
    <DockHeader title="Property Editor" />
    <PropertyTools>
      <FilterInput placeholder="Filter" />
      <svg width="30" height="28" viewBox="0 0 30 28"><path d="M10 1h5v8h8v5h-8v8h-5v-8H2V9h8z" fill="#2fd62f" stroke="#109010" /><path d="M11 2h3v8H3v1" stroke="#b5f5a5" fill="none" /><path d="M20 21h7l-3.500 4z" /></svg>
      <svg width="30" height="28" viewBox="0 0 30 28"><rect x="8.500" y="8.500" width="21" height="5" rx="1" fill="#d8d8d8" stroke="#aaa" /></svg>
      <svg width="40" height="28" viewBox="0 0 40 28"><path d="M16 21L29 7" stroke="#555" strokeWidth="5" strokeLinecap="round" /><path d="M16 21L29 7" stroke="#c4c4c4" strokeWidth="2.800" strokeLinecap="round" /><path d="M27 5l2-4 5-1-2 4 2 2 3-1-2 4-4 2-4-2z" fill="#ddd" stroke="#888" strokeWidth="0.800" /><path d="M33 21h7l-3.500 4z" /></svg>
    </PropertyTools>
    <ObjectPath>stackedWidget : QStackedWidget</ObjectPath>
    <ScrollFrame>
      <ScrollContent>
        <HeaderRow $first={150}><span>Property</span><span>Value</span></HeaderRow>
        {properties.map((p, i) => (
          <PropertyRow key={p.name} $alt={i % 2 === 1}>
            <div><Expander>{p.open && <Chevron dir="right" color="#a3a37c" />}</Expander>{p.name}</div>
            <div>{p.check ? <CheckSquare /> : p.value}</div>
          </PropertyRow>
        ))}
      </ScrollContent>
      <Scroller before={128} h={40} />
    </ScrollFrame>
  </Dock>
);

const ResourceBrowser = () => (
  <Dock>
    <DockHeader title="Resource Browser" />
    <ResourceTools>
      <Svg s={22}><path d="M1 23l2-6L18 2l4 4L7 21z" fill="#f0a93a" stroke="#b06f1b" /><path d="M4 18L18 4" stroke="#ffd98c" strokeWidth="1.500" /><path d="M17.500 2.500L20 0.500l3.500 3.500-2 2.500z" fill="#d8694a" stroke="#8f4130" strokeWidth="0.600" /><path d="M1 23l2-6 4 4z" fill="#f1dab2" /><path d="M1 23l1-2 1 1z" fill="#222" /></Svg>
      <Svg s={22}><path d="M17 17.500A7.500 7.500 0 1 1 18 7.500" stroke="#1d9a26" strokeWidth="6" /><path d="M23.500 2v11h-11z" fill="#35a44a" /></Svg>
      <FilterInput placeholder="Filter" />
    </ResourceTools>
    <Panes>
      <Pane>&lt;resource root&gt;</Pane>
      <Pane />
    </Panes>
    <Tabs>
      <Tab $w={127}>Signal/Slot Editor</Tab>
      <Tab $w={101}>Action Editor</Tab>
      <Tab $w={135} $on>Resource Browser</Tab>
    </Tabs>
  </Dock>
);

const Edge = () => (
  <svg width="30" height="30" viewBox="0 0 30 30">
    <defs>
      <linearGradient id="edgeTop" x1="0" y1="0" x2="1" y2="0.300"><stop offset="0.200" stopColor="#2aa7e6" /><stop offset="0.600" stopColor="#35c7c0" /><stop offset="1" stopColor="#66df5b" /></linearGradient>
      <linearGradient id="edgeLow" x1="0" y1="0" x2="0.600" y2="1"><stop offset="0" stopColor="#1a8fe0" /><stop offset="1" stopColor="#0f64bd" /></linearGradient>
    </defs>
    <path d="M0 16C0 6 7 0 15 0c9 0 15 6 15 12 0 5-4 8-8 8-3 0-5-1-4-3 2-3 0-8-6-8C6 9 2 12 0 16z" fill="url(#edgeTop)" />
    <path d="M0 15c1-4 5-7 10-7 5 0 9 3 9 7-1-2-3-3-5-2-3 2-3 9 3 12 4 2 8 1 11-2-3 5-8 7-13 7C6 30 0 23 0 15z" fill="url(#edgeLow)" />
    <path d="M12 12c-4 4-4 12 2 16 2 1 4 2 6 1 4-1 6-3 8-6-5 3-12 2-14-4-1-3 0-6 2-6.500-1-.8-3-1-4-.5z" fill="#0d4ba0" />
  </svg>
);
const Store = () => (
  <svg width="30" height="30" viewBox="0 0 30 30"><path d="M7.500 9V2q0-1 1-1h13q1 0 1 1v7" fill="none" stroke="#dcdcdc" strokeWidth="2" /><path d="M0.500 9h29v21h-29z" fill="#f1f1f1" /><path d="M10 14h5v5h-5z" fill="#f25022" /><path d="M16 14h5v5h-5z" fill="#7fba00" /><path d="M10 20h5v5h-5z" fill="#00a4ef" /><path d="M16 20h5v5h-5z" fill="#ffb900" /></svg>
);
const Mail = () => (
  <svg width="30" height="28" viewBox="0 0 30 28"><path d="M0 9L15 0l15 9z" fill="#0b62b5" /><path d="M0 9h30v19H0z" fill="#28a8ea" /><path d="M0 9l30 19H0z" fill="#1490df" /><path d="M30 9L14 18l16 10z" fill="#50c9f6" /><path d="M2 9h26L15 18z" fill="#f5f5f5" /></svg>
);
const Folder = () => (
  <svg width="28" height="24" viewBox="0 0 28 24"><path d="M0 0.500h12l2 4H0z" fill="#e8a317" /><path d="M0 4h13l1.500-2H28v21H0z" fill="#ffd767" /><path d="M5 24V15q0-3 3-3h12q3 0 3 3v9h-5v-6h-8v6z" fill="#3f9ae0" /></svg>
);
const Chrome = () => (
  <svg width="34" height="32" viewBox="-2 0 34 32"><circle cx="14" cy="15" r="14" fill="#de4b3d" /><path d="M2 8a14 14 0 0 0 10 21l5-9-9-3z" fill="#1da462" /><path d="M12 29a14 14 0 0 0 15-19H15l5 8z" fill="#ffcd42" /><circle cx="14" cy="14" r="6.500" fill="#fff" /><circle cx="14" cy="14" r="5" fill="#4285f4" /><circle cx="21.500" cy="22" r="9.500" fill="#5a9a32" /><text x="21.500" y="26" fontSize="11" fontFamily="Open Sans" fontWeight="600" textAnchor="middle" fill="#e6f0dc">N</text></svg>
);
const PyCharm = () => (
  <svg width="28" height="28" viewBox="0 0 28 28"><path d="M0 0h28v28H0z" fill="#22d38c" /><path d="M14 0h14v16z" fill="#eaf03a" /><path d="M28 14v14H12z" fill="#d8f03a" /><path d="M0 18l10 10H0z" fill="#1fb6e8" /><path d="M20 0h8v10z" fill="#2fcbe0" /><path d="M4 4h20v20H4z" fill="#000" /><text x="5.500" y="15.500" fontSize="11.500" fontFamily="Open Sans" fontWeight="700" fill="#fff">PC</text><path d="M6 20h7v1.500H6z" fill="#fff" /></svg>
);

const TaskStrip = () => (
  <TaskBar>
    <Start><svg width="20" height="20" viewBox="0 0 20 20" fill="#fff"><path d="M0 2.800l8.200-1.200v8H0zM9.200 1.500L20 0v9.600H9.200zM0 10.500h8.200v8L0 17.300zM9.200 10.500H20V20L9.200 18.500z" /></svg></Start>
    <Search>
      <svg width="21" height="21" viewBox="0 0 21 21" fill="none" stroke="#111" strokeWidth="1.500"><circle cx="13" cy="7.500" r="6.500" /><path d="M8.500 12.500L1 20" /></svg>
      พิมพ์ที่นี่เพื่อค้นหา
    </Search>
    <TaskItem $w={60}><svg width="20" height="20" viewBox="0 0 20 20"><circle cx="10" cy="10" r="8.500" fill="none" stroke="#fff" strokeWidth="2.400" /></svg></TaskItem>
    <TaskItem $w={62}><svg width="22" height="20" viewBox="0 0 22 20" fill="none" stroke="#fff" strokeWidth="1.300"><path d="M1.500 0v3.500h12V0M1.500 20v-3.500h12V20M1.500 6h12v8h-12zM19 0v4M19 9v11" /><path d="M17.300 5h3.400v3.400h-3.400z" fill="#fff" stroke="none" /></svg></TaskItem>
    <TaskItem $w={63}><Edge /></TaskItem>
    <TaskItem $w={62}><Store /></TaskItem>
    <TaskItem $w={62}><Mail /></TaskItem>
    <TaskItem $w={62} $open><Folder /></TaskItem>
    <TaskItem $w={62} $open><Chrome /></TaskItem>
    <TaskItem $w={62} $open><PyCharm /></TaskItem>
    <TaskItem $w={61} $on><QtIcon s={26} /></TaskItem>
    <Tray>
      <svg width="16" height="10" viewBox="0 0 16 10" fill="none" stroke="#fff" strokeWidth="1.400"><path d="M0.500 9L8 1.200 15.500 9" /></svg>
      <TrayGap $w={15} />
      <svg width="16" height="16" viewBox="0 0 16 16" fill="none" stroke="#cfcac6" strokeWidth="1.300"><path d="M1 15A14 14 0 0 1 15 1M4.500 15A10.500 10.500 0 0 1 15 4.800M8 15a7 7 0 0 1 7-6.500" /><circle cx="13.500" cy="13.500" r="2" fill="#fff" stroke="none" /></svg>
      <TrayGap $w={11} />
      <svg width="21" height="14" viewBox="0 0 21 14" fill="none" stroke="#fff" strokeWidth="1.300"><path d="M5 2.500h13.500v10H5V9M18.500 5.500h1.500v4h-1.500" /><path d="M8 5h7.500v5.500H8z" fill="#fff" stroke="none" /><path d="M1.500 0v3M4.500 0v3M0.500 3h5v3l-2.500 1.500L0.500 6zM3 7v6" /></svg>
      <TrayGap $w={9} />
      <svg width="19" height="14" viewBox="0 0 19 14" fill="none" stroke="#fff" strokeWidth="1.300"><path d="M1 4.500h2.500L7 1v12L3.500 9.500H1zM11 3.500l7 7M18 3.500l-7 7" /></svg>
      <Lang>ENG</Lang>
      <Clock>0:13<br />7/11/2563</Clock>
      <Notice>
        <svg width="20" height="21" viewBox="0 0 20 21"><path d="M0 0h20v17H9l-4 4v-4H0z" fill="#fff" /><path d="M4 4.500h12M4 8.500h12M4 12.500h8" stroke="#222" strokeWidth="1.300" /></svg>
        <Badge>3</Badge>
      </Notice>
      <TrayGap $w={5} />
    </Tray>
  </TaskBar>
);

export default function App() {
  return (
    <Screen>
      <GlobalStyle />
      <TitleBar>
        <QtIcon s={17} />
        Qt Designer
        <WindowControls>
          <svg width="12" height="12"><path d="M0 6.500h12" stroke="#000" /></svg>
          <svg width="12" height="12" fill="none" stroke="#000"><path d="M0.500 3.500h8v8h-8zM3.500 3.500v-3h8v8h-3" /></svg>
          <svg width="12" height="12" stroke="#000"><path d="M0.500 0.500l11 11M11.500 0.500l-11 11" /></svg>
        </WindowControls>
      </TitleBar>
      <MenuBar>
        {["File", "Edit", "Form", "View", "Settings", "Window", "Help"].map((m) => <span key={m}>{m}</span>)}
      </MenuBar>
      <ToolBar>
        {toolGroups.map((g, i) => (
          <ToolGroup key={i} $w={g.w}>
            <Grip />
            {g.items.map(([icon, on], j) => <ToolButton key={j} $on={on}>{icon}</ToolButton>)}
          </ToolGroup>
        ))}
      </ToolBar>
      <Workspace>
        <WidgetBox />
        <MdiArea><FormWindow /></MdiArea>
        <RightColumn>
          <ObjectInspector />
          <Spacer $h={6} />
          <PropertyEditor />
          <Spacer $h={6} />
          <ResourceBrowser />
        </RightColumn>
      </Workspace>
      <StatusGap />
      <TaskStrip />
    </Screen>
  );
}
